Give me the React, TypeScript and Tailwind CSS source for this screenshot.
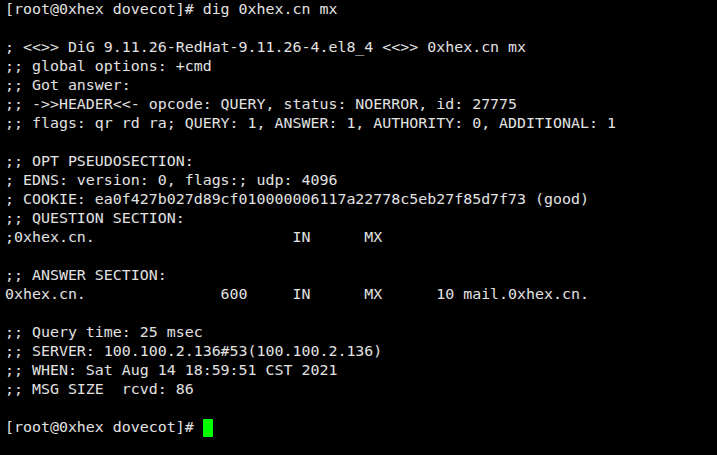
const lines: string[] = [
  "[root@0xhex dovecot]# dig 0xhex.cn mx",
  "",
  "; <<>> DiG 9.11.26-RedHat-9.11.26-4.el8_4 <<>> 0xhex.cn mx",
  ";; global options: +cmd",
  ";; Got answer:",
  ";; ->>HEADER<<- opcode: QUERY, status: NOERROR, id: 27775",
  ";; flags: qr rd ra; QUERY: 1, ANSWER: 1, AUTHORITY: 0, ADDITIONAL: 1",
  "",
  ";; OPT PSEUDOSECTION:",
  "; EDNS: version: 0, flags:; udp: 4096",
  "; COOKIE: ea0f427b027d89cf010000006117a22778c5eb27f85d7f73 (good)",
  ";; QUESTION SECTION:",
  ";0xhex.cn.                      IN      MX",
  "",
  ";; ANSWER SECTION:",
  "0xhex.cn.               600     IN      MX      10 mail.0xhex.cn.",
  "",
  ";; Query time: 25 msec",
  ";; SERVER: 100.100.2.136#53(100.100.2.136)",
  ";; WHEN: Sat Aug 14 18:59:51 CST 2021",
  ";; MSG SIZE  rcvd: 86",
  "",
];

export default function App() {
  return (
    <div className="w-[717px] h-[455px] bg-black overflow-hidden pl-[5px] text-[#e2e2e2] text-[14.93px] leading-[19px] font-['DejaVu_Sans_Mono',monospace]">
      {lines.map((l, i) => (
        <div key={i} className="h-[19px] whitespace-pre">
          {l}
        </div>
      ))}
      <div className="h-[19px] whitespace-pre flex items-center">
        <span>[root@0xhex dovecot]# </span>
        <span className="inline-block w-[10px] h-[18px] bg-[#00ff00]" />
      </div>
    </div>
  );
}
